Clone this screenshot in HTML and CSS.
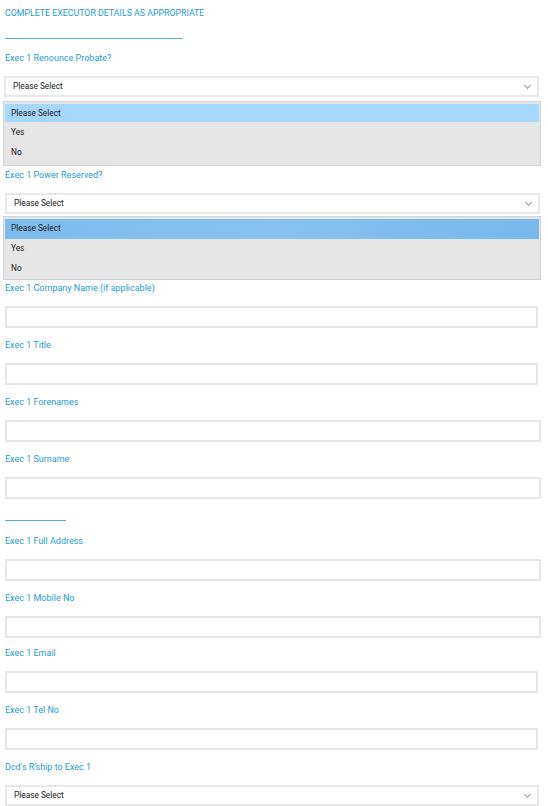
FILE: index.html
```html
<!DOCTYPE html>
<html lang="en">
<head>
  <meta charset="UTF-8" />
  <meta name="viewport" content="width=device-width, initial-scale=1.0"/>
  <title>Executor Details</title>
  <link rel="stylesheet" href="styles.css">
</head>
<body>

<h1 class="heading">COMPLETE EXECUTOR DETAILS AS APPROPRIATE</h1>
<div class="rule"></div>

<!-- Renounce probate, dropdown open -->
<div class="field field-open">
  <label class="lbl">Exec 1 Renounce Probate?</label>
  <div class="select">Please Select<span class="chev"></span></div>
  <ul class="list">
    <li class="opt opt-hover">Please Select</li>
    <li class="opt">Yes</li>
    <li class="opt">No</li>
  </ul>
</div>

<!-- Power reserved, dropdown open -->
<div class="field field-open second">
  <label class="lbl">Exec 1 Power Reserved?</label>
  <div class="select">Please Select<span class="chev"></span></div>
  <ul class="list">
    <li class="opt opt-active">Please Select</li>
    <li class="opt">Yes</li>
    <li class="opt">No</li>
  </ul>
</div>

<div class="field">
  <label class="lbl">Exec 1 Company Name (if applicable)</label>
  <input class="box narrow" type="text">
</div>

<div class="field">
  <label class="lbl">Exec 1 Title</label>
  <input class="box narrow" type="text">
</div>

<div class="field">
  <label class="lbl">Exec 1 Forenames</label>
  <input class="box" type="text">
</div>

<div class="field">
  <label class="lbl">Exec 1 Surname</label>
  <input class="box" type="text">
</div>

<div class="rule short"></div>

<div class="field">
  <label class="lbl">Exec 1 Full Address</label>
  <input class="box" type="text">
</div>

<div class="field tight">
  <label class="lbl">Exec 1 Mobile No</label>
  <input class="box" type="text">
</div>

<div class="field">
  <label class="lbl">Exec 1 Email</label>
  <input class="box narrow" type="text">
</div>

<div class="field">
  <label class="lbl">Exec 1 Tel No</label>
  <input class="box narrow" type="text">
</div>

<div class="field">
  <label class="lbl">Dcd's R'ship to Exec 1</label>
  <div class="select last">Please Select<span class="chev"></span></div>
</div>

</body>
</html>
```

FILE: styles.css
```css
body {
  margin: 0;
  padding: 5px 0 0 5px;
  width: 537px;
  font-family: Roboto, "Open Sans", sans-serif;
  font-size: 9px;
  color: #1a1a1a;
  background: #fff;
}
.heading {
  margin: 0;
  font-size: 8.8px;
  font-weight: normal;
  line-height: 16px;
  color: #229cd6;
}
.rule {
  height: 1px;
  width: 178px;
  background: #4fb0de;
  margin: 17px 0 11px;
}
.rule.short {
  width: 61px;
  margin: 21px 0 12px;
}
.field {
  margin-bottom: 9px;
}
.field.tight {
  margin-bottom: 7px;
}
.lbl {
  display: block;
  line-height: 16px;
  margin-bottom: 10px;
  color: #229cd6;
}
.box {
  display: block;
  box-sizing: border-box;
  width: 536px;
  height: 22px;
  margin: 0;
  border: 2px solid #e6e6e6;
  background: #fff;
  outline: none;
}
.box.narrow {
  width: 533px;
}
.select {
  position: relative;
  box-sizing: border-box;
  width: 535px;
  height: 21px;
  margin-left: -1px;
  padding-left: 7px;
  border: 2px solid #e8e8e8;
  font-size: 8.3px;
  line-height: 17px;
  background: #fff;
}
.second .select {
  margin-left: 0;
}
.select.last {
  margin-left: 0;
  width: 534px;
}
.chev {
  position: absolute;
  right: 7px;
  top: 5px;
  width: 4px;
  height: 4px;
  border-right: 1px solid #999;
  border-bottom: 1px solid #999;
  transform: rotate(45deg);
}
.list {
  list-style: none;
  box-sizing: border-box;
  width: 538px;
  height: 65px;
  margin: 4px 0 0 -2px;
  padding: 2px 1px 1px;
  background: #e6e6e6;
  border: 1px solid #d2d2d2;
  font-size: 8.3px;
}
.field-open {
  margin-bottom: 1px;
}
.second {
  margin-bottom: 0;
}
.second .list {
  margin-top: 2px;
  height: 64px;
}
.opt {
  height: 20px;
  line-height: 19px;
  padding-left: 6px;
}
.opt-hover {
  background: #a6d8fe;
  height: 18px;
  line-height: 18px;
  margin-bottom: 1px;
}
.opt-active {
  background: linear-gradient(90deg, #7dbcee 0%, #86c1ef 50%, #78b8ec 100%);
}
```
